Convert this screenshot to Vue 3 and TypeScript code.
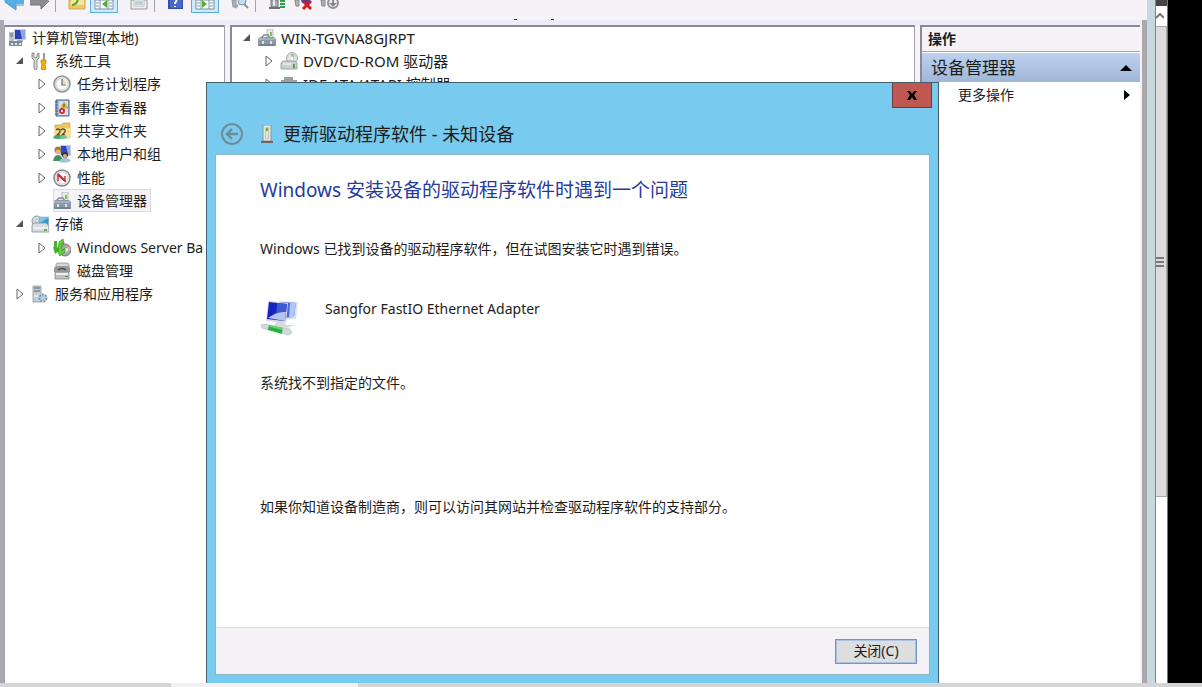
<script setup lang="ts">
interface TreeRow {
  label: string
  icon: string
  level: number
  state?: 'open' | 'closed'
  selected?: boolean
}

const icons: Record<string, string> = {
  computer:
    '<path d="M6 0h12v11H6z" fill="#c9cfdd"/><path d="M7 1h10v9H7z" fill="#2a41b8"/><path d="M12 1h5v9h-3z" fill="#8fa4e6"/><path d="M1 3h5v9H1z" fill="#b9c4cc"/><path d="M2 5h3M2 7h3" stroke="#5d6e7e"/><path d="M9 11h6v2H9z" fill="#aab"/><path d="M1 12h13v5H1z" fill="#7a8b99"/><path d="M3 14h2v2H3zm4 0h2v2H7zm4 0h2v2h-2z" fill="#dce4ea"/>',
  tools:
    '<path d="M1 1v5l2 2v9q2 2 3 0V8l2-2V1L6 2v3L5 6 3 5V1z" fill="#d5d5d5" stroke="#777" stroke-width=".8"/><path d="M12 1h2v8h-2z" fill="#999"/><path d="M10 8h5v3l-1 1 1 5q-3 2-5 0l1-5-1-1z" fill="#f3ae16" stroke="#bc7b00" stroke-width=".7"/>',
  clock:
    '<circle cx="9" cy="9" r="8" fill="#e8e8e4" stroke="#95979a" stroke-width="1.6"/><circle cx="9" cy="9" r="6" fill="#fafaf4" stroke="#c2c5c8" stroke-width=".7"/><path d="M9 9V4a5 5 0 0 1 4 5z" fill="#f0dc9a"/><path d="M9 4v6h4" fill="none" stroke="#55708e" stroke-width="1.2"/>',
  event:
    '<path d="M3 1h13v16H3z" fill="#a8bcdc" stroke="#4a648c"/><path d="M6 2h9v14H6z" fill="#d9dfec"/><path d="M2 3h3M2 6h3M2 9h3M2 12h3M2 15h3" stroke="#445a78"/><path d="M11 3l4 6H8z" fill="#f4c719" stroke="#ba9207" stroke-width=".6"/><path d="M11 5v3" stroke="#443700"/><circle cx="9" cy="12" r="3" fill="#d32c35"/><path d="M8 11l2 2m0-2l-2 2" stroke="#fff" stroke-width=".8"/>',
  share:
    '<path d="M2 3h6l2-2h7v15H2z" fill="#e9c85c" stroke="#c7a13c" stroke-width=".7"/><path d="M2 6h15v10H2z" fill="#f8df88"/><path d="M3 8q2-2 4 0v2L4 13h3M8 8q2-2 4 0v2l-3 3h3" fill="none" stroke="#5b4526" stroke-width="1.300"/><path d="M0 16q1-3 5-3t5 3q-5 2-10 0z" fill="#46a66d"/><path d="M7 16q1-3 4-3t3 3q-4 2-7 0z" fill="#6fc7b0"/>',
  users:
    '<path d="M7 0h11v11H7z" fill="#c7cbd8"/><path d="M8 1h9v9H8z" fill="#2847be"/><path d="M13 1h4v9h-2z" fill="#92a9e8"/><circle cx="5" cy="5" r="3.500" fill="#a37c3b"/><circle cx="5" cy="7" r="2.500" fill="#e6b487"/><path d="M0 16q1-6 5-6t5 6z" fill="#408f61"/><circle cx="12" cy="10" r="3" fill="#3c342d"/><circle cx="12" cy="11" r="2" fill="#dfae87"/><path d="M6 17q1-4 6-4t6 3q-5 3-12 1z" fill="#9cc4e0"/>',
  perf:
    '<circle cx="9" cy="9" r="8" fill="#eee" stroke="#848689" stroke-width="1.500"/><circle cx="9" cy="9" r="6" fill="#fff" stroke="#bbb" stroke-width=".7"/><path d="M5 12V6l7 6V7" fill="none" stroke="#d52b32" stroke-width="1.500"/><path d="M5 5l7 7" stroke="#d52b32" stroke-width="2"/>',
  device:
    '<path d="M9 0h6v9H9z" fill="#e4eae4" stroke="#a8b0a9" stroke-width=".7"/><path d="M12 3h2v4h-2z" fill="#79c943"/><path d="M3 9l3-3h4l2 3" fill="none" stroke="#7d8b96" stroke-width="1.300"/><path d="M0 10l2-2h14l2 2v7H0z" fill="#8a99a5"/><path d="M1 10h16" stroke="#c2ccd4"/><path d="M1 15h16v2H1z" fill="#74838f"/><path d="M4 12h2v3H4zm8 0h2v3h-2z" fill="#dce4e9"/>',
  storage:
    '<circle cx="6" cy="6" r="5" fill="#d7dce1" stroke="#8d969e"/><circle cx="6" cy="6" r="1.500" fill="#fff" stroke="#8d969e" stroke-width=".6"/><path d="M8 2h10v8H8z" fill="#3498cf" stroke="#bcd1dd"/><path d="M9 3h8l-8 5z" fill="#7ac9ed"/><path d="M1 10l2-2h12l3 3v6H1z" fill="#dadddf" stroke="#899198" stroke-width=".8"/><path d="M2 13h15" stroke="#fff"/><path d="M13 14h3v2h-3z" fill="#51bd42"/>',
  backup:
    '<circle cx="12" cy="11" r="6" fill="#a5a8aa" stroke="#777"/><path d="M12 11l4-4 2 4z" fill="#dfb2a8"/><circle cx="13" cy="11" r="2" fill="#eee"/><path d="M1 2h3v7l2-2v5L2 15 0 8h1z" fill="#48ae2b"/><path d="M6 3l4-3 1 5-2-1v8l3-3v4l-5 4-2-4z" fill="#66cf37" stroke="#309022" stroke-width=".7"/>',
  disk:
    '<path d="M3 2l2-1h9l2 1v5H3z" fill="#d6d6d6" stroke="#888" stroke-width=".7"/><path d="M1 6l2-2h12l2 2v4H1z" fill="#999"/><path d="M5 8q4-3 8 0" fill="none" stroke="#444" stroke-width="1.500"/><path d="M2 10h14v7H2z" fill="#bfc2c3" stroke="#888" stroke-width=".8"/><path d="M3 11h12v2H3z" fill="#eee"/><path d="M12 14h3v1h-3z" fill="#4a9b42"/>',
  services:
    '<path d="M2 1h8v16H2z" fill="#c5ced5" stroke="#8d9aa4" stroke-width=".8"/><path d="M3 3h6M3 6h6" stroke="#50616d"/><path d="M3 11h4" stroke="#fff"/><circle cx="12" cy="13" r="3.500" fill="#c1d7e8" stroke="#7899b4" stroke-width="2" stroke-dasharray="2 1"/><circle cx="12" cy="13" r="1.300" fill="#fff" stroke="#7899b4" stroke-width=".6"/>',
  dvd:
    '<circle cx="12" cy="6" r="5.500" fill="#dfe1e3" stroke="#969a9e" stroke-width=".8"/><path d="M12 6V1q3 0 5 3z" fill="#c6dfc1"/><path d="M11 2h3v5h-3z" fill="#9cc58c"/><circle cx="12" cy="6" r="1.500" fill="#fff"/><path d="M1 11l2-2h12l2 2v6H1z" fill="#cbd0d3" stroke="#8c959b" stroke-width=".8"/><path d="M3 12h8" stroke="#fff"/><path d="M13 12h2v4h-2z" fill="#48a93b"/>',
  ide:
    '<path d="M4 2h9v3h4v10H1V5h3z" fill="#98a0a5"/>',
}

const treeRows: TreeRow[] = [
  { label: '计算机管理(本地)', icon: 'computer', level: 0 },
  { label: '系统工具', icon: 'tools', level: 1, state: 'open' },
  { label: '任务计划程序', icon: 'clock', level: 2, state: 'closed' },
  { label: '事件查看器', icon: 'event', level: 2, state: 'closed' },
  { label: '共享文件夹', icon: 'share', level: 2, state: 'closed' },
  { label: '本地用户和组', icon: 'users', level: 2, state: 'closed' },
  { label: '性能', icon: 'perf', level: 2, state: 'closed' },
  { label: '设备管理器', icon: 'device', level: 2, selected: true },
  { label: '存储', icon: 'storage', level: 1, state: 'open' },
  { label: 'Windows Server Ba', icon: 'backup', level: 2, state: 'closed' },
  { label: '磁盘管理', icon: 'disk', level: 2 },
  { label: '服务和应用程序', icon: 'services', level: 1, state: 'closed' },
]

const deviceRows: TreeRow[] = [
  { label: 'WIN-TGVNA8GJRPT', icon: 'device', level: 1, state: 'open' },
  { label: 'DVD/CD-ROM 驱动器', icon: 'dvd', level: 2, state: 'closed' },
  { label: 'IDE ATA/ATAPI 控制器', icon: 'ide', level: 2, state: 'closed' },
]
</script>

<template>
  <div class="screen">
    <div class="stage">
      <div class="window">
        <div class="toolbar">
          <button class="tool" aria-label="后退">
            <svg width="22" height="14"><path d="M1 0h20v4h-8v6L2 2z" fill="#55aee8" /><path d="M2 2l11 8V5h8" fill="none" stroke="#4a92d0" /></svg>
          </button>
          <button class="tool" aria-label="前进">
            <svg width="22" height="14"><path d="M1 0h19l-8 9V5H1z" fill="#8c8b8d" /><path d="M1 5h11v4l8-8" fill="none" stroke="#757477" /></svg>
          </button>
          <i class="divider"></i>
          <button class="tool up" aria-label="上一级">
            <svg width="18" height="14"><path d="M1 0h16v9H1z" fill="#ecc767" stroke="#d0ab50" /><path d="M3 0h13v5H3z" fill="#f9e49a" /><path d="M4 5q4 0 6-5" stroke="#43a530" stroke-width="2" fill="none" /></svg>
          </button>
          <button class="tool active" aria-label="显示控制台树">
            <svg width="20" height="12"><path d="M1 0h18v9H1z" fill="#fff" stroke="#768da3" /><path d="M6 0v9M14 0v9M2 3h3M2 6h3M15 3h3M15 6h3" stroke="#8195a5" /><path d="M13 0v8L8 4z" fill="#52ad31" /></svg>
          </button>
          <button class="tool export" aria-label="属性">
            <svg width="18" height="14"><path d="M1 0h16v9H1z" fill="#eee" stroke="#969a9e" /><path d="M4 0h10v6H4z" fill="#fff" stroke="#aaa" stroke-width=".7" /><path d="M5 2h8M5 4h8" stroke="#78a5b9" /></svg>
          </button>
          <i class="divider second"></i>
          <button class="tool help" aria-label="帮助">
            <svg width="16" height="14"><path d="M0 0h15v9H0z" fill="#334db0" /><path d="M2 0h12v8H2z" fill="#4769c7" /><path d="M9 0L7 3v1M7 6v1" stroke="#fff" stroke-width="2" /></svg>
          </button>
          <button class="tool active" aria-label="显示操作窗格">
            <svg width="20" height="12"><path d="M1 0h18v9H1z" fill="#fff" stroke="#768da3" /><path d="M6 0v9M14 0v9M2 3h3M2 6h3M15 3h3M15 6h3" stroke="#8195a5" /><path d="M7 0v8l5-4z" fill="#52ad31" /></svg>
          </button>
          <button class="tool scan" aria-label="扫描检测硬件改动">
            <svg width="20" height="14"><path d="M1 0h4v7H2z" fill="#b2b2b7" stroke="#95959a" /><circle cx="11" cy="1" r="4" fill="#bfdbed" stroke="#8090a8" /><path d="M13 4l4 4" stroke="#8b9198" stroke-width="2" /><path d="M7 5l-3 3" stroke="#8fa8c7" stroke-width="2" /></svg>
          </button>
          <i class="divider"></i>
          <button class="tool update" aria-label="更新驱动程序">
            <svg width="18" height="14"><path d="M3 0h7v7H3z" fill="#a8aaae" stroke="#74777c" /><path d="M5 0h2v6H5z" fill="#e7e7e9" /><path d="M1 8h11" stroke="#6d7274" stroke-width="2" /><path d="M12 1h5M12 4h5M12 7h5" stroke="#24a64a" stroke-width="2" /></svg>
          </button>
          <button class="tool remove" aria-label="卸载">
            <svg width="20" height="14"><path d="M1 0h4v6H2z" fill="#b2b2b7" stroke="#85858a" /><path d="M7 0h9v3H8z" fill="#3547ba" /><path d="M9 1l8 8M17 1L9 9" stroke="#d71920" stroke-width="3" /></svg>
          </button>
          <button class="tool disable" aria-label="禁用">
            <svg width="20" height="14"><path d="M1 0h4v6H2z" fill="#b2b2b7" stroke="#85858a" /><circle cx="13" cy="3" r="5" fill="#eee" stroke="#949498" stroke-width="2" /><path d="M12 0h2v3h3l-4 4-4-4h3z" fill="#878b90" /></svg>
          </button>
          <span class="marks"><i></i><i></i></span>
        </div>

        <div class="panes">
          <nav class="pane tree">
            <ul class="rows full">
              <li v-for="row in treeRows" :key="row.label" :class="['row', 'level' + row.level]">
                <span class="arrow">
                  <svg v-if="row.state === 'closed'" width="9" height="12"><path d="M2 1v10l6-5z" fill="#fff" stroke="#666" /></svg>
                  <svg v-else-if="row.state === 'open'" width="9" height="12"><path d="M8 2v7H1z" fill="#555" /></svg>
                </span>
                <span :class="['node', { selected: row.selected }]">
                  <svg class="icon" viewBox="0 0 18 18" v-html="icons[row.icon]"></svg>
                  <span>{{ row.label }}</span>
                </span>
              </li>
            </ul>
          </nav>

          <main class="pane devices">
            <ul class="rows short">
              <li v-for="row in deviceRows" :key="row.label" :class="['row', 'level' + row.level]">
                <span class="arrow">
                  <svg v-if="row.state === 'closed'" width="9" height="12"><path d="M2 1v10l6-5z" fill="#fff" stroke="#666" /></svg>
                  <svg v-else width="9" height="12"><path d="M8 2v7H1z" fill="#555" /></svg>
                </span>
                <span class="node">
                  <svg class="icon" viewBox="0 0 18 18" v-html="icons[row.icon]"></svg>
                  <span>{{ row.label }}</span>
                </span>
              </li>
            </ul>
          </main>

          <aside class="pane actions">
            <h2 class="actions-title">操作</h2>
            <button class="actions-group">
              <span>设备管理器</span>
              <svg width="12" height="6"><path d="M0 6l6-6 6 6z" /></svg>
            </button>
            <button class="actions-item">
              <span>更多操作</span>
              <svg width="6" height="10"><path d="M0 0l6 5-6 5z" /></svg>
            </button>
          </aside>
        </div>

        <section class="dialog" role="dialog" aria-labelledby="dialog-title">
          <button class="close" aria-label="关闭">
            <svg width="10" height="9"><path d="M0 0h3l2 3 2-3h3L7 4l3 5H7L5 6 3 9H0l3-5z" /></svg>
          </button>
          <header class="dialog-head">
            <button class="back" aria-label="返回">
              <svg width="24" height="24"><circle cx="12" cy="12" r="10" fill="none" stroke="#708b99" stroke-width="2" /><path d="M18 12H7m5-5l-5 5 5 5" fill="none" stroke="#708b99" stroke-width="2.400" /></svg>
            </button>
            <svg class="unit" width="12" height="18"><path d="M2 0h8v16H2z" fill="#e6e6e1" stroke="#93958f" /><path d="M4 2h4v12H4z" fill="#c6c7c1" /><path d="M5 3h2v3H5z" fill="#69b82f" /><path d="M6 6v7" stroke="#fff" /><path d="M0 16h12v2H0z" fill="#68686a" /></svg>
            <span id="dialog-title">更新驱动程序软件 - 未知设备</span>
          </header>
          <div class="sheet">
            <div class="content">
              <h1>Windows 安装设备的驱动程序软件时遇到一个问题</h1>
              <p class="found">Windows 已找到设备的驱动程序软件，但在试图安装它时遇到错误。</p>
              <div class="adapter">
                <svg width="40" height="38">
                  <path d="M19 2l19 1-2 17-14 1z" fill="#e0e3f0" /><path d="M21 3l15 1-2 14-12 1z" fill="#4668d8" /><path d="M30 4l6 0-2 14-5 0z" fill="#b3c5f4" />
                  <path d="M8 2l20 2-2 20-20-2z" fill="#d5d8e7" /><path d="M9 3l18 2-2 17L7 20z" fill="#1524bd" /><path d="M17 4l10 1-2 12-9 2z" fill="#4058d4" /><path d="M8 19q9-7 18-6l-1 9z" fill="#b4c4ef" />
                  <path d="M17 23l7 0 2 3 9 0-8 3-14-2z" fill="#d8dadd" />
                  <path d="M1 26l7-1 3 3-2 3-7-2z" fill="#d1dbdd" stroke="#b2c0c1" stroke-width=".7" /><path d="M9 26l15 3-2 6-14-4z" fill="#26af45" /><path d="M10 27l13 3" stroke="#6ad473" stroke-width="2" /><path d="M23 29l7 1 2 4-4 2-6-2z" fill="#d1dbdd" stroke="#b2c0c1" stroke-width=".7" />
                </svg>
                <span>Sangfor FastIO Ethernet Adapter</span>
              </div>
              <p class="reason">系统找不到指定的文件。</p>
              <p class="hint">如果你知道设备制造商，则可以访问其网站并检查驱动程序软件的支持部分。</p>
            </div>
            <footer><button class="dismiss">关闭(C)</button></footer>
          </div>
        </section>
      </div>

      <div class="vscroll">
        <div class="vscroll-top"></div>
        <button class="vscroll-up" aria-label="向上滚动">
          <svg width="8" height="6"><path d="M0 5l4-4 4 4" fill="none" stroke="#777" stroke-width="2" /></svg>
        </button>
        <div class="vthumb"><i></i><i></i><i></i></div>
      </div>
      <div class="void"></div>
    </div>
    <div class="hscroll"><div class="hthumb"></div></div>
  </div>
</template>

<style>
body {
  margin: 0;
  overflow: hidden;
}
</style>

<style scoped>
.screen {
  height: 100vh;
  display: flex;
  flex-direction: column;
  overflow: hidden;
  background: #000;
  color: #1c1c1c;
  font-family: "Noto Sans", "Noto Sans CJK SC", sans-serif;
  font-size: 14px;
  line-height: 20px;
}
.screen * {
  box-sizing: border-box;
}
button {
  margin: 0;
  padding: 0;
  border: 0;
  background: none;
  color: inherit;
  font: inherit;
}
svg {
  display: block;
  flex: none;
}
h1, h2, p, ul {
  margin: 0;
  padding: 0;
  font-weight: normal;
}
.stage {
  flex: 1;
  min-height: 0;
  display: flex;
}
.window {
  position: relative;
  flex: 1;
  min-width: 0;
  display: flex;
  flex-direction: column;
  background: #f5f3f7;
  border-right: 8px solid #c8d8df;
}
.toolbar {
  height: 20px;
  flex: none;
  display: flex;
  align-items: flex-start;
  padding-left: 3px;
}
.tool {
  flex: none;
  margin-right: 4px;
}
.divider {
  width: 1px;
  height: 12px;
  background: #a5a4a8;
}
.up {
  margin-left: 12px;
}
.active {
  height: 13px;
  padding: 0 3px;
  border: 1px solid #59aedd;
  border-top: 0;
  background: #cfeafa;
}
.export {
  margin-left: 8px;
}
.second {
  margin-left: 2px;
}
.help {
  margin: 0 7px 0 13px;
}
.scan {
  margin-left: 8px;
}
.update {
  margin: 0 8px 0 12px;
}
.remove {
  margin-right: 6px;
}
.marks {
  align-self: flex-end;
  display: flex;
  gap: 34px;
  margin-left: 170px;
}
.marks i {
  width: 3px;
  height: 1px;
  background: #333;
}
.panes {
  flex: 1;
  min-height: 0;
  display: flex;
  gap: 5px;
  padding: 5px 2px 0 0;
  border-left: 4px solid #aaa8ac;
  border-right: 5px solid #aaa8ac;
  background: linear-gradient(#ededfa 0 4px, #f5f3f7 6px);
}
.pane {
  background: #fff;
  border: 1px solid #a3a2ad;
  border-top: 2px solid #8b8a94;
  border-bottom: 0;
  overflow: hidden;
}
.tree {
  width: 221px;
  flex: none;
}
.devices {
  flex: 1;
  min-width: 0;
  border-left: 2px solid #8b8a94;
  font-size: 15px;
}
.actions {
  width: 220px;
  flex: none;
  border-left: 2px solid #8b8a94;
  border-right: 0;
}
.rows {
  list-style: none;
  display: grid;
  grid-auto-rows: 1fr;
  margin-top: -1px;
}
.full {
  height: 280px;
}
.short {
  height: 70px;
}
.row {
  display: flex;
  align-items: center;
  min-height: 0;
  white-space: nowrap;
}
.arrow {
  width: 9px;
  margin-right: 7px;
}
.node {
  display: flex;
  align-items: center;
  gap: 6px;
  height: 23px;
  padding-right: 4px;
}
.icon {
  width: 18px;
  height: 18px;
}
.selected {
  background: #f4f2f6;
  outline: 1px solid #dcdae0;
  outline-offset: -1px;
}
.level0 .arrow {
  margin-right: -6px;
}
.level1 {
  padding-left: 10px;
}
.level2 {
  padding-left: 32px;
}
.short .node {
  gap: 5px;
}
.actions-title {
  height: 25px;
  padding: 2px 6px 0;
  border-bottom: 1px solid #a5a4aa;
  background: #f5f3f7;
  font-size: 14px;
  font-weight: 700;
}
.actions-group {
  width: 100%;
  height: 29px;
  margin-top: 1px;
  padding: 0 8px 0 9px;
  display: flex;
  align-items: center;
  justify-content: space-between;
  background: linear-gradient(#bdd2ed, #9fb6d8);
  font-size: 17px;
}
.actions-item {
  width: 100%;
  height: 26px;
  padding: 0 10px 0 36px;
  display: flex;
  align-items: center;
  justify-content: space-between;
}
.dialog {
  position: absolute;
  top: 82px;
  bottom: 0;
  left: 206px;
  right: 208px;
  display: flex;
  flex-direction: column;
  padding: 0 8px 8px;
  border: 1px solid #44616e;
  border-bottom: 0;
  background: #78cbee;
}
.close {
  width: 40px;
  height: 25px;
  flex: none;
  align-self: flex-end;
  display: flex;
  align-items: center;
  justify-content: center;
  margin-right: -2px;
  border: 1px solid #6b3b43;
  border-top: 0;
  background: #be5851;
}
.dialog-head {
  height: 46px;
  flex: none;
  display: flex;
  align-items: center;
  padding: 5px 0 0 5px;
  font-size: 18px;
  line-height: 24px;
}
.unit {
  margin: 0 10px 0 17px;
}
.sheet {
  flex: 1;
  min-height: 0;
  display: flex;
  flex-direction: column;
  border: 1px solid #8fb3c6;
  background: #fff;
}
.content {
  flex: 1;
  padding: 21px 44px 0;
}
h1 {
  color: #263b9c;
  font-size: 19px;
  line-height: 28px;
}
.found {
  margin-top: 35px;
}
.adapter {
  display: flex;
  gap: 25px;
  margin-top: 40px;
}
.reason {
  margin-top: 36px;
}
.hint {
  margin-top: 104px;
}
footer {
  height: 47px;
  flex: none;
  display: flex;
  align-items: center;
  justify-content: flex-end;
  padding-right: 12px;
  border-top: 1px solid #dedce1;
  background: #f4f2f6;
}
.dismiss {
  width: 82px;
  height: 25px;
  border: 1px solid #6d97c6;
  outline: 1px solid #a9c3e0;
  outline-offset: -2px;
  background: #dedede;
}
.vscroll {
  width: 13px;
  flex: none;
  display: flex;
  flex-direction: column;
  background: #fff;
  border-left: 1px solid #7c8488;
  border-right: 1px solid #777;
}
.vscroll-top {
  height: 6px;
  background: #444;
}
.vscroll-up {
  height: 20px;
  display: flex;
  align-items: center;
  justify-content: flex-start;
}
.vthumb {
  height: 69%;
  display: flex;
  flex-direction: column;
  justify-content: center;
  gap: 2px;
  border: 1px solid #a9a9a9;
  border-left: 0;
  background: #dcdcdc;
}
.vthumb i {
  width: 8px;
  height: 2px;
  background: #777;
}
.void {
  width: 34px;
  flex: none;
  background: #000;
}
.hscroll {
  height: 4px;
  flex: none;
  padding-left: 171px;
  background: #d5d5d5;
}
.hthumb {
  width: 187px;
  height: 100%;
  background: #f1f1f1;
}
</style>
